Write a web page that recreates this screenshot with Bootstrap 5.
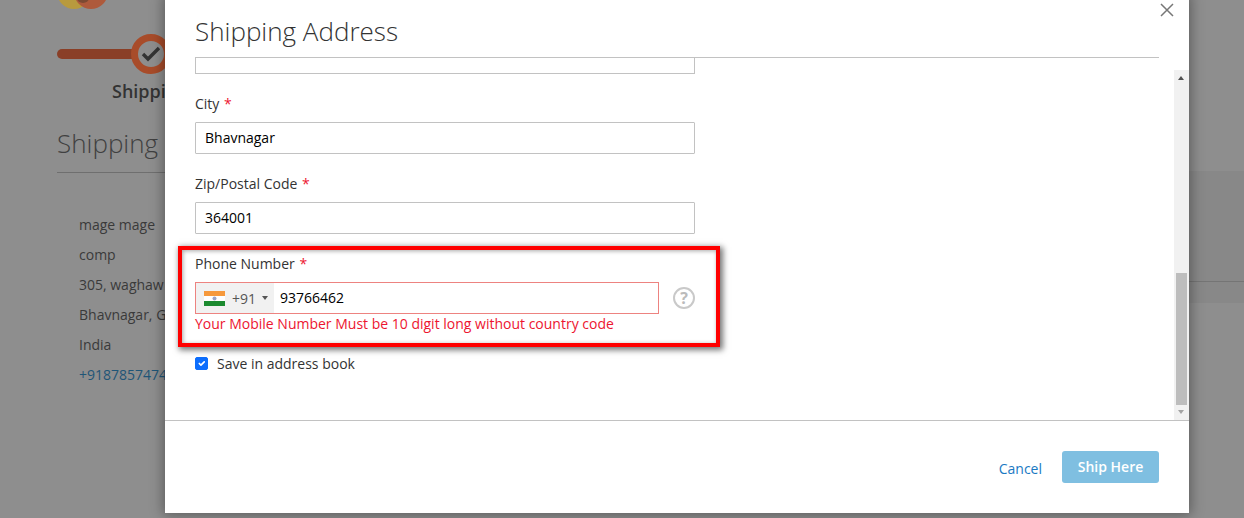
<!DOCTYPE html>
<html lang="en">
  <head>
    <meta charset="UTF-8" />
    <title>Shipping Address</title>
    <link href="https://cdn.jsdelivr.net/npm/bootstrap@5.3.2/dist/css/bootstrap.min.css" rel="stylesheet" />
    <style>
      html, body { height: 518px; overflow: hidden; }
      body { font-family: "Open Sans", sans-serif; font-size: 14px; color: #333; background: #8e8e8e; }
      /* page behind the modal, already dimmed */
      .page-back { height: 518px; position: relative; }
      .back-col { width: 165px; height: 518px; padding-left: 57px; overflow: hidden; white-space: nowrap; position: relative; z-index: 1; }
      .logo-spot { height: 9px; }
      .logo-spot svg { display: block; }
      .step-row { height: 40px; margin-top: 25px; width: 114px; }
      .step-line { width: 80px; height: 10px; background: #8a3f27; border-radius: 5px; margin-right: -6px; }
      .step-ring { width: 40px; height: 40px; border: 7px solid #a84c2a; border-radius: 50%; background: #8e8e8e; flex: none; position: relative; }
      .step-name { font-size: 18px; font-weight: 600; margin: 5px 0 0 55px; line-height: 25px; color: #333; }
      .back-title { font-size: 26px; font-weight: 300; line-height: 32px; margin: 23px 0 0; padding-bottom: 13px; border-bottom: 1px solid #6f6f6f; color: #404040; }
      .back-addr { margin: 37px 0 0 22px; line-height: 30px; color: #3a3a3a; }
      .back-addr a { color: #1f5577; text-decoration: none; }
      .back-band { position: absolute; right: 0; top: 171px; width: 300px; height: 132px; background: #888; }
      .back-rule { position: absolute; right: 0; top: 281px; width: 300px; height: 1px; background: #757575; }
      /* modal */
      .ship-modal { position: absolute; z-index: 2; left: 165px; top: -4px; width: 1024px; height: 517px; background: #fff; box-shadow: 0 0 12px 2px rgba(0, 0, 0, .35); }
      .ship-head { height: 62px; margin: 0 30px; border-bottom: 1px solid #c2c2c2; padding-top: 19px; }
      .ship-head h1 { font-size: 26px; font-weight: 300; line-height: 32px; margin: 0; color: #333; }
      .ship-close { position: absolute; top: 7px; right: 15px; width: 14px; height: 14px; padding: 0; border: 0; background: none; line-height: 0; }
      .ship-body { height: 362px; position: relative; overflow: hidden; }
      .ship-fields { padding: 0 30px; width: 560px; }
      .stub-input { height: 16px; border: 1px solid #c2c2c2; border-top: 0; width: 500px; }
      .ship-label { line-height: 19px; margin: 20px 0 0; display: block; color: #333; }
      .ship-label b { color: #ed1530; font-weight: 400; margin-left: 1px; }
      .ship-input { display: block; width: 500px; height: 32px; margin-top: 9px; border: 1px solid #c2c2c2; padding: 0 9px; font-size: 14px; color: #000; line-height: 30px; border-radius: 1px; }
      .zip-label { margin-top: 20px; }
      .phone-box { position: relative; margin-top: 20px; }
      .phone-field { width: 464px; height: 32px; margin-top: 9px; border: 1px solid #ed8380; }
      .phone-dial { width: 78px; background: #f1f1f1; padding-left: 8px; color: #555; flex: none; }
      .phone-dial .dial-code { margin-left: 7px; }
      .phone-caret { width: 0; height: 0; border: 3px solid transparent; border-top: 4px solid #555; border-bottom: 0; margin-left: 6px; }
      .phone-num { padding-left: 6px; color: #000; line-height: 30px; }
      .phone-help { margin-left: 14px; width: 22px; height: 22px; border: 2px solid #c9c9c9; border-radius: 50%; color: #bbb; font-size: 16px; font-weight: 700; line-height: 18px; text-align: center; flex: none; }
      .phone-err { color: #ed1530; line-height: 19px; }
      .red-mark { position: absolute; z-index: 3; left: 178px; top: 246px; width: 542px; height: 101px; border: 4px solid #f00; box-shadow: 2px 2px 6px 1px rgba(0, 0, 0, .55), inset 1px 1px 4px rgba(0, 0, 0, .35); }
      .save-row { margin-top: 20px; height: 20px; }
      .save-row .form-check-input { margin: 0; width: 13px; height: 13px; border-radius: 2px; background-color: #0d6efd; border-color: #0d6efd; }
      .save-row span { margin-left: 9px; }
      .fake-scroll { position: absolute; right: 0; top: 12px; bottom: 0; width: 15px; background: #f1f1f1; }
      .fake-thumb { position: absolute; left: 2px; width: 11px; top: 203px; height: 132px; background: #bdbdbd; }
      .arrow-up, .arrow-down { position: absolute; left: 4px; width: 0; height: 0; border: 3.5px solid transparent; }
      .arrow-up { top: 6px; border-bottom: 4px solid #505050; border-top: 0; }
      .arrow-down { bottom: 6px; border-top: 4px solid #a3a3a3; border-bottom: 0; }
      .ship-foot { height: 93px; border-top: 1px solid #c2c2c2; padding: 30px 30px 0; }
      .ship-foot a { color: #1979c3; text-decoration: none; margin: 8px 20px 0 0; line-height: 19px; }
      .btn.ship-btn, .btn.ship-btn:disabled { width: 97px; height: 32px; background: #7fbfe1; color: #fff; border: 0; border-radius: 3px; font-size: 14px; font-weight: 600; padding: 0 0 2px; opacity: 1; }
    </style>
  </head>
  <body>
    <div class="page-back">
      <div class="back-band"></div>
      <div class="back-rule"></div>
      <div class="back-col">
        <div class="logo-spot">
          <svg width="52" height="9" viewBox="0 0 52 9">
            <circle cx="17" cy="-8" r="17" fill="#b89a3e" />
            <circle cx="34" cy="-8" r="17" fill="#ae5a3c" />
            <ellipse cx="26" cy="-2" rx="6" ry="5" fill="#7c4a33" />
          </svg>
        </div>
        <div class="step-row d-flex align-items-center">
          <div class="step-line"></div>
          <div class="step-ring d-flex align-items-center justify-content-center">
            <svg width="20" height="18" viewBox="0 0 20 18"><path d="M2 9l5 5L18 3" fill="none" stroke="#333" stroke-width="3.4" /></svg>
          </div>
        </div>
        <div class="step-name">Shippi</div>
        <div class="back-title">Shipping</div>
        <div class="back-addr">
          <div>mage mage</div>
          <div>comp</div>
          <div>305, waghaw</div>
          <div>Bhavnagar, G</div>
          <div>India</div>
          <div><a href="#">+9187857474</a></div>
        </div>
      </div>
    </div>

    <div class="ship-modal">
      <button class="ship-close" type="button" aria-label="Close">
        <svg width="14" height="14" viewBox="0 0 14 14"><path d="M1 1l12 12M13 1L1 13" stroke="#777" stroke-width="1.5" fill="none" /></svg>
      </button>
      <div class="ship-head"><h1>Shipping Address</h1></div>
      <div class="ship-body">
        <div class="ship-fields">
          <div class="stub-input"></div>
          <label class="ship-label">City <b>*</b></label>
          <div class="ship-input">Bhavnagar</div>
          <label class="ship-label zip-label">Zip/Postal Code <b>*</b></label>
          <div class="ship-input">364001</div>
          <div class="phone-box">
            <label class="ship-label m-0">Phone Number <b>*</b></label>
            <div class="d-flex align-items-center">
              <div class="phone-field d-flex align-items-stretch">
                <div class="phone-dial d-flex align-items-center">
                  <svg width="21" height="15" viewBox="0 0 21 15"><rect width="21" height="5" fill="#f6993c" /><rect y="5" width="21" height="5" fill="#fff" /><rect y="10" width="21" height="5" fill="#1c8a2f" /><circle cx="10.5" cy="7.5" r="2" fill="#9aa4c8" /></svg>
                  <span class="dial-code">+91</span>
                  <span class="phone-caret"></span>
                </div>
                <div class="phone-num">93766462</div>
              </div>
              <div class="phone-help mt-2">?</div>
            </div>
            <div class="phone-err">Your Mobile Number Must be 10 digit long without country code</div>
          </div>
          <div class="save-row d-flex align-items-center">
            <input class="form-check-input" type="checkbox" checked />
            <span>Save in address book</span>
          </div>
        </div>
        <div class="fake-scroll">
          <div class="arrow-up"></div>
          <div class="fake-thumb"></div>
          <div class="arrow-down"></div>
        </div>
      </div>
      <div class="ship-foot d-flex justify-content-end align-items-start">
        <a href="#">Cancel</a>
        <button class="btn ship-btn" type="button" disabled>Ship Here</button>
      </div>
    </div>
    <div class="red-mark"></div>

    <script src="https://cdn.jsdelivr.net/npm/bootstrap@5.3.2/dist/js/bootstrap.bundle.min.js"></script>
  </body>
</html>
